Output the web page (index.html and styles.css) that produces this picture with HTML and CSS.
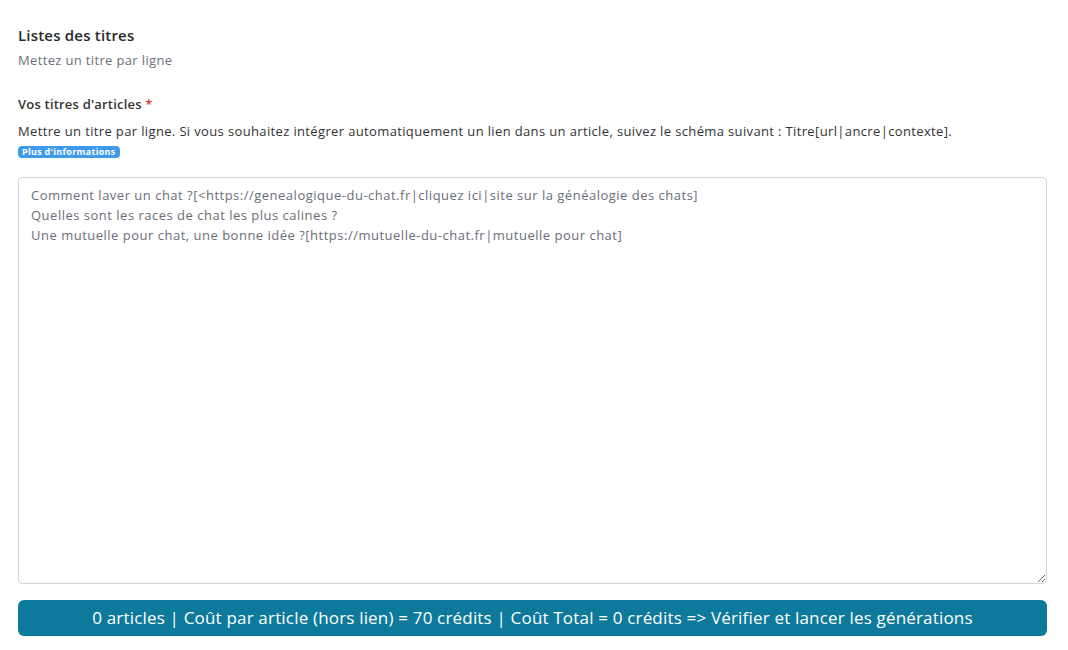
FILE: index.html
```html
<!DOCTYPE html>
<html lang="fr">
<head>
<meta charset="utf-8">
<link rel="stylesheet" href="styles.css">
</head>
<body>
<div class="page">
  <div class="section-head">
    <h2 class="section-title">Listes des titres</h2>
    <p class="section-sub">Mettez un titre par ligne</p>
  </div>
  <div class="field">
    <label class="field-label">Vos titres d'articles <span class="req">*</span></label>
    <p class="field-help">Mettre un titre par ligne. Si vous souhaitez intégrer automatiquement un lien dans un article, suivez le schéma suivant : Titre[url|ancre|contexte].</p>
    <span class="badge">Plus d'informations</span>
    <textarea class="titles">Comment laver un chat ?[&lt;https://genealogique-du-chat.fr|cliquez ici|site sur la généalogie des chats]
Quelles sont les races de chat les plus calines ?
Une mutuelle pour chat, une bonne idée ?[https://mutuelle-du-chat.fr|mutuelle pour chat]</textarea>
  </div>
  <button class="launch">0 articles | Coût par article (hors lien) = 70 crédits | Coût Total = 0 crédits =&gt; Vérifier et lancer les générations</button>
</div>
</body>
</html>
```
FILE: styles.css
```css
html, body {
  margin: 0;
  padding: 0;
  background: #ffffff;
}
body {
  font-family: "Open Sans", "DejaVu Sans", sans-serif;
  color: #333333;
}
.page {
  padding: 24px 21px 0 18px;
  display: flex;
  flex-direction: column;
}
.section-title {
  margin: 0;
  font-size: 15px;
  font-weight: 600;
  color: #2a2a2a;
  line-height: 22px;
  letter-spacing: 0.2px;
}
.section-sub {
  margin: 4px 0 0;
  font-size: 13px;
  color: #6c727b;
  line-height: 20px;
  letter-spacing: 0.35px;
}
.field {
  margin-top: 24px;
  display: flex;
  flex-direction: column;
  align-items: flex-start;
}
.field-label {
  font-size: 13px;
  font-weight: 600;
  color: #333333;
  line-height: 20px;
  letter-spacing: 0.2px;
}
.req {
  color: #e3342f;
}
.field-help {
  margin: 7px 0 0;
  font-size: 13px;
  color: #333333;
  line-height: 20px;
  letter-spacing: 0.36px;
}
.badge {
  margin-top: 5px;
  background: #3d9be9;
  color: #ffffff;
  font-size: 9px;
  font-weight: 700;
  line-height: 12px;
  padding: 0 4px;
  border-radius: 4px;
  letter-spacing: 0.3px;
}
.titles {
  margin-top: 19px;
  box-sizing: border-box;
  width: 100%;
  height: 407px;
  border: 1px solid #d0d3d8;
  border-radius: 4px;
  padding: 7px 12px 8px;
  font-family: inherit;
  font-size: 13px;
  line-height: 20px;
  color: #6b6e78;
  letter-spacing: 0.5px;
  resize: vertical;
}
.launch {
  margin-top: 16px;
  height: 36px;
  width: 100%;
  border: none;
  border-radius: 6px;
  background: #0d7a9b;
  color: #ffffff;
  font-family: inherit;
  font-size: 17px;
  line-height: 36px;
  padding: 0;
  letter-spacing: 0.18px;
}
```
